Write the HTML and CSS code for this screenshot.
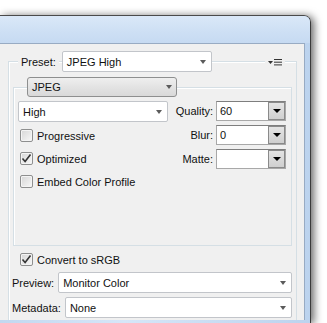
FILE: index.html
```html
<!DOCTYPE html>
<html lang="en">
<head>
    <meta charset="UTF-8">
    <title>Save for Web - JPEG</title>
    <link rel="stylesheet" href="styles.css">
</head>
<body>

<div class="window">
    <div class="titlebar"></div>
    <div class="client">
        <div class="group outer">
            <div class="group-head">
                <span class="cap">Preset:</span>
                <div class="combo preset"><span>JPEG High</span><i class="arrow"></i></div>
                <span class="menu">
                    <svg width="14" height="8" viewBox="0 0 14 8">
                        <path d="M0 3h5l-2.5 3z" fill="#333"/>
                        <path d="M6 1.5h8M6 4.2h8M6 6.9h8" stroke="#333" stroke-width="1"/>
                    </svg>
                </span>
            </div>

            <div class="group inner">
                <div class="group-head head-inner">
                    <div class="button-combo"><span>JPEG</span><i class="arrow"></i></div>
                </div>
                <div class="settings">
                    <div class="left-col">
                        <div class="combo quality-combo"><span>High</span><i class="arrow"></i></div>
                        <label class="check"><span class="box"></span>Progressive</label>
                        <label class="check"><span class="box checked"><svg width="11" height="11" viewBox="0 0 11 11"><path d="M1.5 5.5l2.6 3L9.5 1.5" fill="none" stroke="#333" stroke-width="1.6"/></svg></span>Optimized</label>
                        <label class="check"><span class="box"></span>Embed Color Profile</label>
                    </div>
                    <div class="right-col">
                        <div class="field"><span>Quality:</span><div class="spin"><span>60</span><b class="btn"><i></i></b></div></div>
                        <div class="field"><span>Blur:</span><div class="spin"><span>0</span><b class="btn"><i></i></b></div></div>
                        <div class="field"><span>Matte:</span><div class="spin"><span></span><b class="btn"><i></i></b></div></div>
                    </div>
                </div>
            </div>

            <label class="check srgb"><span class="box checked"><svg width="11" height="11" viewBox="0 0 11 11"><path d="M1.5 5.5l2.6 3L9.5 1.5" fill="none" stroke="#333" stroke-width="1.6"/></svg></span>Convert to sRGB</label>
            <div class="line-field first">
                <span>Preview:</span>
                <div class="combo grow"><span>Monitor Color</span><i class="arrow"></i></div>
            </div>
            <div class="line-field">
                <span>Metadata:</span>
                <div class="combo grow"><span>None</span><i class="arrow"></i></div>
            </div>
        </div>
    </div>
</div>

</body>
</html>
```

FILE: styles.css
```css
body {
    margin: 0;
    height: 323px;
    overflow: hidden;
    background-color: #fff;
    font-family: "Liberation Sans", Arial, sans-serif;
    font-size: 11px;
    color: #111;
}
.window {
    box-sizing: border-box;
    width: 311px;
    height: 308px;
    margin-top: 15px;
    padding-right: 5px;
    background: linear-gradient(to right, #c2d8f0, #d6e6f8 40%, #bcd3ee);
    border-top: 1px solid #4a4a4a;
    border-right: 1px solid #3a3a3a;
    border-top-right-radius: 7px;
    box-shadow: 3px 1px 9px rgba(0, 0, 0, 0.6);
}
.titlebar {
    height: 27px;
    margin-right: -5px;
    border-top-right-radius: 6px;
    background: linear-gradient(#dae8f8, #cddff4 60%, #c6daf2);
}
.client {
    height: 276px;
    overflow: hidden;
    background-color: #f0f0f0;
    border-top: 1px solid #98abc3;
    border-right: 1px solid #98abc3;
}
.group {
    border: 1px solid #d5dfe5;
    box-shadow: inset 1px 1px 0 #fff;
}
.outer {
    margin: 17px 7px 0 8px;
    height: 320px;
}
.group-head {
    display: flex;
    align-items: center;
    height: 21px;
    margin-top: -11px;
    padding-left: 9px;
}
.cap {
    padding: 0 3px;
    background-color: #f0f0f0;
}
.combo {
    box-sizing: border-box;
    display: flex;
    align-items: center;
    justify-content: space-between;
    height: 21px;
    padding: 0 5px 0 4px;
    background-color: #fff;
    border: 1px solid #c2c5ca;
    border-radius: 2px;
}
.preset {
    width: 150px;
    margin-left: 3px;
}
.arrow {
    width: 0;
    height: 0;
    border-left: 3.5px solid transparent;
    border-right: 3.5px solid transparent;
    border-top: 4px solid #5b5b5b;
}
.menu {
    display: flex;
    margin-left: auto;
    margin-right: 11px;
    padding: 0 3px;
    background-color: #f0f0f0;
}
.inner {
    box-sizing: border-box;
    height: 159px;
    margin: 15px 4px 0 4px;
}
.head-inner {
    height: 20px;
    padding-left: 13px;
}
.button-combo {
    box-sizing: border-box;
    display: flex;
    align-items: center;
    justify-content: space-between;
    width: 150px;
    height: 20px;
    padding: 0 4px 0 4px;
    background: linear-gradient(#efefef, #e3e3e3 50%, #d9d9d9);
    border: 1px solid #8e8f8f;
    border-radius: 3px;
}
.settings {
    display: flex;
    justify-content: space-between;
    padding: 4px 5px 0 4px;
}
.left-col {
    width: 150px;
}
.quality-combo {
    margin-bottom: 2px;
}
.check {
    display: flex;
    align-items: center;
    height: 23px;
    padding-left: 2px;
}
.box {
    box-sizing: border-box;
    display: flex;
    align-items: center;
    justify-content: center;
    width: 13px;
    height: 13px;
    margin-right: 4px;
    border: 1px solid #8e8f8f;
    border-radius: 2px;
    background: linear-gradient(135deg, #d6d6d6, #f8f8f8);
    box-shadow: inset 0 0 0 1px #f4f4f4;
}
.right-col {
    width: 111px;
}
.field {
    display: flex;
    align-items: center;
    justify-content: flex-end;
    height: 20px;
    margin-bottom: 4px;
}
.field > span {
    margin-right: 3px;
}
.spin {
    box-sizing: border-box;
    display: flex;
    align-items: center;
    justify-content: space-between;
    width: 70px;
    height: 20px;
    padding-left: 3px;
    background-color: #fff;
    border: 1px solid #a8a8a8;
    border-top-color: #7e7e7e;
}
.btn {
    box-sizing: border-box;
    display: flex;
    align-items: center;
    justify-content: center;
    width: 17px;
    height: 18px;
    background: linear-gradient(#e4e4e4, #cfcfcf);
    border: 1px solid #8a8a8a;
}
.btn i {
    width: 0;
    height: 0;
    border-left: 4px solid transparent;
    border-right: 4px solid transparent;
    border-top: 4px solid #000;
}
.srgb {
    margin-top: 2px;
    padding-left: 11px;
}
.line-field {
    display: flex;
    align-items: center;
    gap: 4px;
    margin-top: 4px;
    padding: 0 4px 0 3px;
}
.line-field.first {
    margin-top: 1px;
}
.grow {
    flex: 1;
}
```
